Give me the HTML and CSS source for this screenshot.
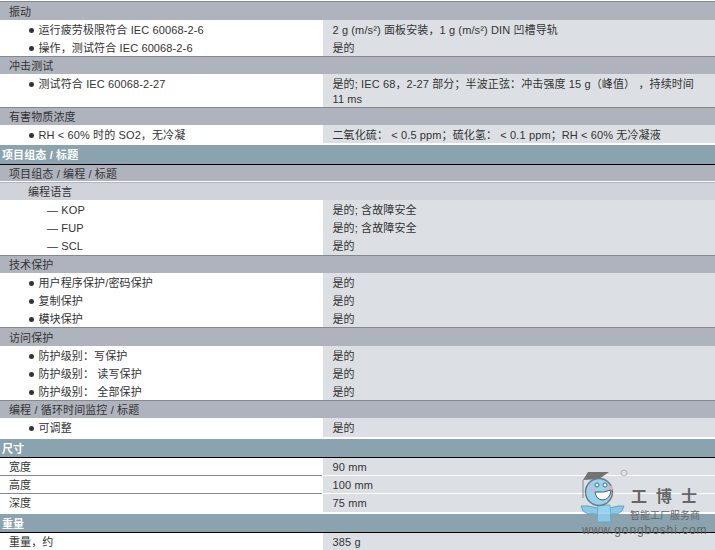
FILE: index.html
```html
<!DOCTYPE html>
<html lang="zh-CN">
<head>
<meta charset="utf-8">
<title>技术规范</title>
<link rel="stylesheet" href="styles.css">
</head>
<body>
<main class="spec">
  <div class="group top h18">振动</div>
  <div class="row"><div class="name bullet">运行疲劳极限符合 IEC 60068-2-6</div><div class="val">2 g (m/s²) 面板安装，1 g (m/s²) DIN 凹槽导轨</div></div>
  <div class="row"><div class="name bullet">操作，测试符合 IEC 60068-2-6</div><div class="val">是的</div></div>
  <div class="group">冲击测试</div>
  <div class="row"><div class="name bullet">测试符合 IEC 60068-2-27</div><div class="val">是的; IEC 68，2-27 部分；半波正弦：冲击强度 15 g（峰值） ，持续时间 11 ms</div></div>
  <div class="group">有害物质浓度</div>
  <div class="row last"><div class="name bullet">RH &lt; 60% 时的 SO2，无冷凝</div><div class="val">二氧化硫： &lt; 0.5 ppm；硫化氢： &lt; 0.1 ppm；RH &lt; 60% 无冷凝液</div></div>

  <h2 class="section first">项目组态 / 标题</h2>
  <div class="group sub1">项目组态 / 编程 / 标题</div>
  <div class="group light">编程语言</div>
  <div class="row"><div class="name dash">— KOP</div><div class="val">是的; 含故障安全</div></div>
  <div class="row"><div class="name dash">— FUP</div><div class="val">是的; 含故障安全</div></div>
  <div class="row tall"><div class="name dash">— SCL</div><div class="val">是的</div></div>
  <div class="group">技术保护</div>
  <div class="row"><div class="name bullet">用户程序保护/密码保护</div><div class="val">是的</div></div>
  <div class="row"><div class="name bullet">复制保护</div><div class="val">是的</div></div>
  <div class="row"><div class="name bullet">模块保护</div><div class="val">是的</div></div>
  <div class="group h18">访问保护</div>
  <div class="row"><div class="name bullet">防护级别：写保护</div><div class="val">是的</div></div>
  <div class="row"><div class="name bullet">防护级别： 读写保护</div><div class="val">是的</div></div>
  <div class="row"><div class="name bullet">防护级别： 全部保护</div><div class="val">是的</div></div>
  <div class="group">编程 / 循环时间监控 / 标题</div>
  <div class="row last tall"><div class="name bullet">可调整</div><div class="val">是的</div></div>

  <h2 class="section">尺寸</h2>
  <div class="row plain"><div class="name">宽度</div><div class="val">90 mm</div></div>
  <div class="row plain"><div class="name">高度</div><div class="val">100 mm</div></div>
  <div class="row plain last tall"><div class="name">深度</div><div class="val">75 mm</div></div>
  <h2 class="section">重量</h2>
  <div class="row plain last"><div class="name">重量，约</div><div class="val">385 g</div></div>
</main>

<svg class="mark" viewBox="0 0 135 85" width="135" height="85">
  <g class="mascot">
    <path d="M3 15 L8 7 L29 7 L19 14 Z" fill="#5f5f5f"/>
    <path d="M3 15 V33" stroke="#777" stroke-width="1" fill="none"/>
    <path d="M18 43 L8 41 L1 41 L3 46 L8 49 L18 48 Z" fill="#7cc4e6" stroke="#4d9cc6"/>
    <path d="M30 43 L38 41 L44 41 L42 46 L37 49 L30 48 Z" fill="#7cc4e6" stroke="#4d9cc6"/>
    <path d="M18 40 H30 L31 57 H17 Z" fill="#8ed0ee" stroke="#5aa9d0"/>
    <circle cx="19" cy="27" r="13.500" fill="#8bd0f0" stroke="#5a6a72" stroke-width="1.500"/>
    <circle cx="17" cy="20" r="2" fill="#fff" stroke="#356"/>
    <circle cx="25" cy="20" r="2" fill="#fff" stroke="#356"/>
    <circle cx="12" cy="25" r="2.200" fill="#f0a0c0"/>
    <circle cx="31" cy="23" r="2.200" fill="#f0a0c0"/>
    <path d="M15 27 Q24 28 31 25 Q30 35 22 35 Q16 34 15 27 Z" fill="#fff" stroke="#444"/>
    <circle cx="44" cy="8" r="3" fill="none" stroke="#999" stroke-width="0.800"/>
  </g>
  <text class="mark-title" x="51" y="37">工博士</text>
  <text class="mark-sub" x="50" y="54">智能工厂服务商</text>
  <text class="mark-url" x="2" y="69">www.gongboshi.com</text>
</svg>
</body>
</html>
```

FILE: styles.css
```css
* { box-sizing: border-box; }
html, body { margin: 0; padding: 0; background: #fff; overflow: hidden; }
body { height: 550px; position: relative; padding-top: 1px; }
.spec {
  font-family: "Liberation Sans", "Noto Sans CJK SC", sans-serif;
  font-size: 11px;
  line-height: 15px;
  letter-spacing: 0.12px;
  color: #333;
}
.group {
  background: #afb3bd;
  border-top: 1px solid #85888c;
  height: 18px;
  padding: 2px 0 0 9px;
}
.group.top { height: 19px; padding-top: 3px; }
.group.h18 { height: 19px; padding-top: 3px; }
.group.sub1 { border-top: 0; height: 16px; padding-top: 2px; }
.group.light {
  background: #d0d3da;
  border-top: 0;
  box-shadow: 0 -1px 0 #afb3bd;
  margin-top: 2px;
  height: 17px;
  padding-left: 28px;
  padding-top: 2px;
}
.row {
  display: grid;
  grid-template-columns: 322px 392px;
  column-gap: 1px;
}
.name { padding: 3px 0 0 9px; background: #fff; }
.val { padding: 3px 10px 0 9.5px; background: #dce0e4; }
.row.tall .name, .row.tall .val { padding-bottom: 1px; }
.row.last { margin-bottom: 2px; }
.row.plain .name, .row.plain .val { padding-top: 2px; }
.row.plain + .row.plain .name { border-top: 1px solid #85888c; }
.row.plain + .row.plain .val { border-top: 1px solid #fff; }
.bullet { padding-left: 38.5px; position: relative; }
.bullet::before {
  content: "";
  position: absolute;
  left: 29px;
  top: 8px;
  width: 5px;
  height: 4.500px;
  border-radius: 50%;
  background: #333;
}
.dash { padding-left: 47px; }
.section {
  margin: 0;
  background: #8aa3ae;
  color: #fff;
  font-size: 11px;
  line-height: 15px;
  font-weight: 700;
  height: 19px;
  padding: 3px 0 0 2px;
  border-bottom: 1px solid #000;
}
.section.first { height: 20px; }
.mark {
  position: absolute;
  left: 580px;
  top: 465px;
}
.mascot { opacity: 0.85; }
.mark-title { font-family: "Noto Sans CJK SC", sans-serif; font-size: 16px; font-weight: 700; letter-spacing: 9px; fill: #666; }
.mark-sub { font-family: "Noto Sans CJK SC", sans-serif; font-size: 10px; fill: #666; }
.mark-url { font-family: "Liberation Sans", sans-serif; font-size: 12px; letter-spacing: 0.9px; fill: #666; }
```
